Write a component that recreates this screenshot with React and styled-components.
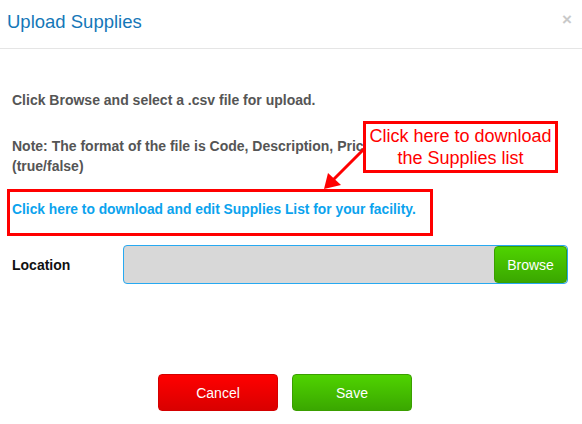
import React from 'react';
import styled, { createGlobalStyle } from 'styled-components';

const GlobalStyle = createGlobalStyle`
    html, body {
        margin:0;
        padding:0;
        background:#fff;
    }
    body {
        font-family:"Liberation Sans", Arial, Helvetica, sans-serif;
    }
`

const Modal = styled.div`
    position:relative;
    width:582px;
    height:424px;
    box-sizing:border-box;
    background:#fff;
    overflow:hidden;
`

const Header = styled.div`
    display:flex;
    justify-content:space-between;
    align-items:flex-start;
    box-sizing:border-box;
    height:49px;
    padding:12px 10px 0 7px;
    border-bottom:1px solid #e5e5e5;
`

const Title = styled.h4`
    margin:0;
    font-size:18.5px;
    line-height:20px;
    font-weight:400;
    color:#1577b8;
`

const Close = styled.button`
    border:0;
    background:none;
    padding:0;
    margin-top:-2px;
    font-family:"Liberation Sans", Arial, sans-serif;
    font-size:17px;
    line-height:20px;
    font-weight:700;
    color:#c9c9c9;
    cursor:pointer;
`

const Body = styled.div`
    display:flex;
    flex-direction:column;
    padding:41px 14px 0 12px;
`

const Text = styled.p`
    margin:0 0 ${props => props.gap || 0}px;
    font-size:14px;
    line-height:20px;
    font-weight:700;
    color:#555;
`

const LinkBox = styled.div`
    align-self:flex-start;
    width:426px;
    box-sizing:border-box;
    margin-left:-5px;
    padding:8px 0 13px 2px;
    border:3px solid #f00;
`

const DownloadLink = styled.a`
    font-size:13.8px;
    line-height:20px;
    font-weight:700;
    color:#0ba3ee;
    text-decoration:none;
    cursor:pointer;
`

const FieldRow = styled.div`
    display:flex;
    align-items:center;
    margin-top:9px;
`

const Label = styled.label`
    width:111px;
    flex:none;
    font-size:14px;
    font-weight:700;
    color:#111;
`

const FileInput = styled.div`
    flex:1;
    display:flex;
    justify-content:flex-end;
    height:39px;
    box-sizing:border-box;
    border:1px solid #27a9f1;
    border-radius:4px;
    background:#d8d8d8;
`

const Button = styled.button`
    width:${props => props.width || 120}px;
    height:${props => props.height || 37}px;
    border:1px solid ${props => props.red ? '#d40000' : '#3a9f00'};
    border-radius:4px;
    background:${props => props.red
        ? 'linear-gradient(#ff0000, #d90000)'
        : 'linear-gradient(#4fd300, #3aa700)'};
    color:#fff;
    font-family:"Liberation Sans", Arial, sans-serif;
    font-size:14px;
    cursor:pointer;
`

const Footer = styled.div`
    display:flex;
    justify-content:center;
    gap:14px;
    padding:90px 12px 0 0;
`

const Callout = styled.div`
    position:absolute;
    left:363px;
    top:121px;
    width:195px;
    height:52px;
    box-sizing:border-box;
    border:3px solid #f00;
    background:#fff;
    display:flex;
    align-items:center;
    justify-content:center;
    text-align:center;
    font-size:18px;
    line-height:22px;
    color:#f00;
`

const Arrow = styled.svg`
    position:absolute;
    left:318px;
    top:144px;
    width:50px;
    height:50px;
    overflow:visible;
`

export default function App() {
    return (
        <Modal>
            <GlobalStyle/>
            <Header>
                <Title>Upload Supplies</Title>
                <Close>×</Close>
            </Header>
            <Body>
                <Text gap={26}>Click Browse and select a .csv file for upload.</Text>
                <Text gap={13}>
                    Note: The format of the file is Code, Description, Price, Active<br/>
                    (true/false)
                </Text>
                <LinkBox>
                    <DownloadLink>Click here to download and edit Supplies List for your facility.</DownloadLink>
                </LinkBox>
                <FieldRow>
                    <Label>Location</Label>
                    <FileInput>
                        <Button width={73} height={37}>Browse</Button>
                    </FileInput>
                </FieldRow>
            </Body>
            <Footer>
                <Button red>Cancel</Button>
                <Button>Save</Button>
            </Footer>
            <Callout>Click here to download<br/>the Supplies list</Callout>
            <Arrow viewBox="318 144 50 50">
                <line x1="364" y1="149" x2="333" y2="180" stroke="#f00" strokeWidth="3"/>
                <polygon points="324,189 328,173 341,185" fill="#f00"/>
            </Arrow>
        </Modal>
    )
}
